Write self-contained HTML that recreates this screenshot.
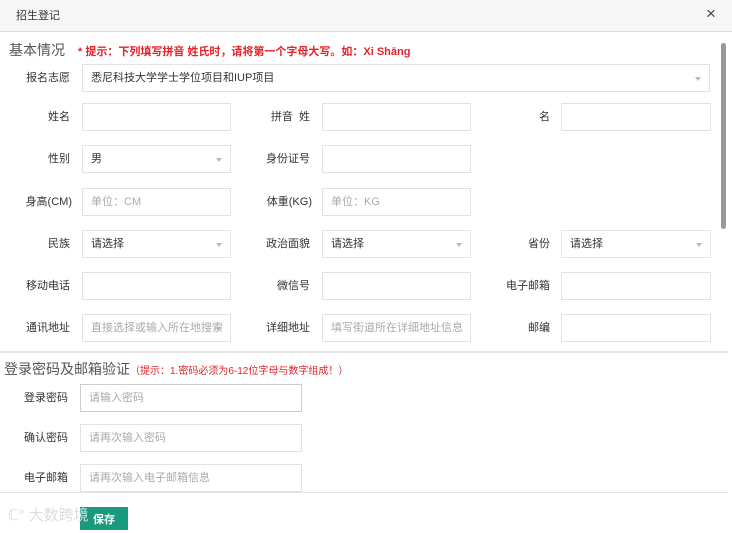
<!DOCTYPE html>
<html><head><meta charset="utf-8"><style>
*{box-sizing:border-box;margin:0;padding:0}
body{width:732px;height:530px;background:#fff;position:relative;overflow:hidden;font-family:"Liberation Sans","Noto Sans CJK SC",sans-serif;font-size:11px;color:#333}
.a{position:absolute}
.in{position:absolute;height:28px;border:1px solid #e2e2e2;background:#fff;padding-left:8px;line-height:26px;font-size:11px;color:#333}
.ph{color:#aaa}
.lb{position:absolute;text-align:right;font-size:11px;color:#333;line-height:28px}
.ar::after{content:"";position:absolute;right:8px;top:12px;border-left:3px solid transparent;border-right:3px solid transparent;border-top:4px solid #bbb}
</style></head><body>
<div class="a" style="left:0;top:0;width:732px;height:32px;background:#f6f6f6;border-bottom:1px solid #ddd"></div>
<div class="a" style="left:16px;top:7px;font-size:11px;color:#333">招生登记</div>
<div class="a" style="left:706px;top:4px;font-size:17px;color:#444">×</div>
<div class="a" style="left:721px;top:43px;width:5px;height:186px;background:#999;border-radius:3px"></div>
<div class="a" style="left:9px;top:40px;font-size:14px;color:#555">基本情况</div>
<div class="a" style="left:78px;top:43px;font-size:11px;color:#e4222a;font-weight:bold">* 提示：下列填写拼音 姓氏时，请将第一个字母大写。如：Xi Shāng</div>

<div class="lb" style="left:0;width:70px;top:64px">报名志愿</div>
<div class="in ar" style="left:82px;top:64px;width:628px">悉尼科技大学学士学位项目和IUP项目</div>

<div class="lb" style="left:0;width:70px;top:103px">姓名</div>
<div class="in" style="left:82px;top:103px;width:149px"></div>
<div class="lb" style="left:240px;width:70px;top:103px">拼音 &nbsp;姓</div>
<div class="in" style="left:322px;top:103px;width:149px"></div>
<div class="lb" style="left:480px;width:70px;top:103px">名</div>
<div class="in" style="left:561px;top:103px;width:150px"></div>

<div class="lb" style="left:0;width:70px;top:145px">性别</div>
<div class="in ar" style="left:82px;top:145px;width:149px">男</div>
<div class="lb" style="left:240px;width:70px;top:145px">身份证号</div>
<div class="in" style="left:322px;top:145px;width:149px"></div>

<div class="lb" style="left:0;width:72px;top:188px">身高(CM)</div>
<div class="in ph" style="left:82px;top:188px;width:149px">单位：CM</div>
<div class="lb" style="left:240px;width:72px;top:188px">体重(KG)</div>
<div class="in ph" style="left:322px;top:188px;width:149px">单位：KG</div>

<div class="lb" style="left:0;width:70px;top:230px">民族</div>
<div class="in ar" style="left:82px;top:230px;width:149px">请选择</div>
<div class="lb" style="left:240px;width:70px;top:230px">政治面貌</div>
<div class="in ar" style="left:322px;top:230px;width:149px">请选择</div>
<div class="lb" style="left:480px;width:70px;top:230px">省份</div>
<div class="in ar" style="left:561px;top:230px;width:150px">请选择</div>

<div class="lb" style="left:0;width:70px;top:272px">移动电话</div>
<div class="in" style="left:82px;top:272px;width:149px"></div>
<div class="lb" style="left:240px;width:70px;top:272px">微信号</div>
<div class="in" style="left:322px;top:272px;width:149px"></div>
<div class="lb" style="left:480px;width:70px;top:272px">电子邮箱</div>
<div class="in" style="left:561px;top:272px;width:150px"></div>

<div class="lb" style="left:0;width:70px;top:314px">通讯地址</div>
<div class="in ar ph" style="left:82px;top:314px;width:149px">直接选择或输入所在地搜索</div>
<div class="lb" style="left:240px;width:70px;top:314px">详细地址</div>
<div class="in ph" style="left:322px;top:314px;width:149px">填写街道所在详细地址信息</div>
<div class="lb" style="left:480px;width:70px;top:314px">邮编</div>
<div class="in" style="left:561px;top:314px;width:150px"></div>

<div class="a" style="left:0;top:351px;width:728px;height:2px;background:#e4e4e4"></div>
<div class="a" style="left:4px;top:359px;font-size:14px;color:#555">登录密码及邮箱验证<span style="font-size:10px;color:#e4222a">（提示：1.密码必须为6-12位字母与数字组成！）</span></div>

<div class="lb" style="left:0;width:68px;top:384px">登录密码</div>
<div class="in ph" style="left:80px;top:384px;width:222px;border-color:#ccc">请输入密码</div>
<div class="lb" style="left:0;width:68px;top:424px">确认密码</div>
<div class="in ph" style="left:80px;top:424px;width:222px">请再次输入密码</div>
<div class="lb" style="left:0;width:68px;top:464px">电子邮箱</div>
<div class="in ph" style="left:80px;top:464px;width:222px">请再次输入电子邮箱信息</div>

<div class="a" style="left:0;top:492px;width:728px;height:1px;background:#e4e4e4"></div>
<div class="a" style="left:80px;top:507px;width:48px;height:23px;background:#1a9a7c;color:#fff;font-size:11px;font-weight:bold;text-align:center;line-height:26px">保存</div>
<div class="a" style="left:8px;top:504px;font-size:15px;color:#ddd">ℂ° 大数跨境</div>
</body></html>
